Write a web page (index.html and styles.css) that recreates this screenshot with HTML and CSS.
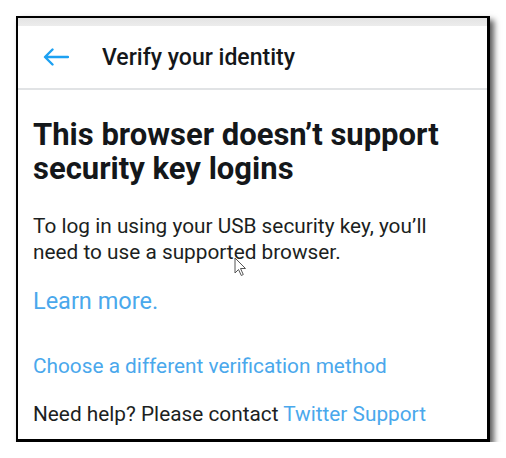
FILE: index.html
```html
<!DOCTYPE html>
<html>
<head>
<meta charset="utf-8">
<link rel="stylesheet" href="styles.css">
</head>
<body>
<div class="frame">
  <div class="statusbar"></div>
  <header class="header">
    <svg class="back" width="26" height="18" viewBox="0 0 26 18" aria-hidden="true">
      <path d="M25 9H2.5M9.5 1.5L2 9l7.5 7.5" fill="none" stroke="#1da1f2" stroke-width="2.4" stroke-linecap="round" stroke-linejoin="round"/>
    </svg>
    <span class="title">Verify your identity</span>
  </header>
  <main class="content">
    <h1 class="heading">This browser doesn’t support security key logins</h1>
    <p class="body">To log in using your USB security key, you’ll need to use a supported browser.</p>
    <a class="learn">Learn more.</a>
    <a class="choose">Choose a different verification method</a>
    <p class="help">Need help? Please contact <a class="support">Twitter Support</a></p>
  </main>
  <svg class="cursor" width="14" height="20" viewBox="0 0 14 20" aria-hidden="true">
    <path d="M1 1v15l3.5-3.5 2.8 6 2-1-2.8-6H11.5z" fill="#fff" stroke="#555" stroke-width="1" stroke-linejoin="round"/>
  </svg>
</div>
</body>
</html>
```

FILE: styles.css
```css
html, body {
  margin: 0;
  padding: 0;
  background: #fff;
}
body {
  padding: 16px 0 0 16px;
  font-family: Roboto, "Liberation Sans", sans-serif;
  color: #14171a;
}
.frame {
  position: relative;
  width: 469px;
  height: 421px;
  border: 2px solid #000;
  border-right-width: 3px;
  border-bottom-width: 3px;
  box-shadow: 4px 4px 6px rgba(0, 0, 0, 0.65);
  background: #fff;
  overflow: hidden;
  display: flex;
  flex-direction: column;
}
.statusbar {
  height: 8px;
  background: linear-gradient(#e4e4e4, #ececec);
  flex: none;
}
.header {
  flex: none;
  height: 64px;
  box-sizing: border-box;
  border-bottom: 2px solid #e1e3e5;
  display: flex;
  align-items: center;
  padding-left: 25px;
}
.back {
  display: block;
}
.title {
  margin-left: 33px;
  font-size: 23px;
  font-weight: 500;
}
.content {
  padding: 0 15px;
  display: flex;
  flex-direction: column;
  align-items: flex-start;
}
.heading {
  margin: 28px 0 0;
  font-size: 31px;
  line-height: 34px;
  font-weight: 700;
}
.body {
  margin: 27px 0 0;
  font-size: 20.8px;
  line-height: 26px;
  font-weight: 400;
  color: #1c1f22;
}
.learn {
  margin-top: 22px;
  font-size: 23.5px;
  line-height: 28px;
  color: #4aa8ec;
}
.choose {
  margin-top: 38px;
  font-size: 20.8px;
  line-height: 26px;
  color: #4aa8ec;
}
.help {
  margin: 22px 0 0;
  font-size: 20.8px;
  line-height: 26px;
  color: #1c1f22;
}
.support {
  color: #4aa8ec;
}
.cursor {
  position: absolute;
  left: 216px;
  top: 239px;
}
```
